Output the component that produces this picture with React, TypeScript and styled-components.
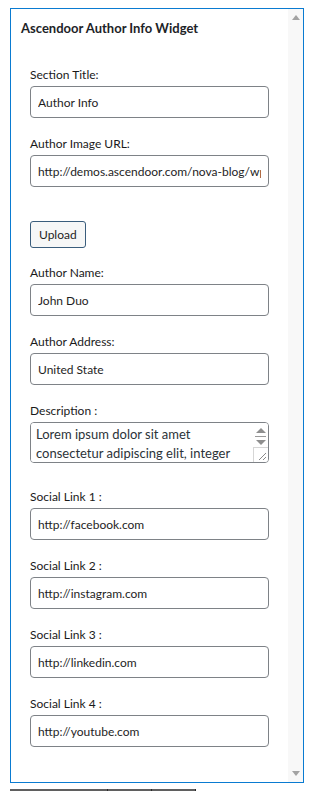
import React from "react";
import styled, { createGlobalStyle } from "styled-components";

const GlobalStyle = createGlobalStyle`
  html, body {
    margin: 0;
    padding: 0;
    background: #ffffff;
  }
  body {
    font-family: Lato, "Open Sans", "Liberation Sans", sans-serif;
    color: #1e1e1e;
  }
`;

type FieldDef = {
  label: string;
  value: string;
};

const topFields: FieldDef[] = [
  { label: "Section Title:", value: "Author Info" },
  { label: "Author Image URL:", value: "http://demos.ascendoor.com/nova-blog/wp-content/uploads/author.jpg" },
];

const middleFields: FieldDef[] = [
  { label: "Author Name:", value: "John Duo" },
  { label: "Author Address:", value: "United State" },
];

const socialFields: FieldDef[] = [
  { label: "Social Link 1 :", value: "http://facebook.com" },
  { label: "Social Link 2 :", value: "http://instagram.com" },
  { label: "Social Link 3 :", value: "http://linkedin.com" },
  { label: "Social Link 4 :", value: "http://youtube.com" },
];

const description =
  "Lorem ipsum dolor sit amet consectetur adipiscing elit, integer nunc quam egestas nibh porta ullamcorper.";

const TextField: React.FC<FieldDef> = ({ label, value }) => (
  <Field>
    <Label>{label}</Label>
    <Input type="text" defaultValue={value} readOnly />
  </Field>
);

const App: React.FC = () => {
  return (
    <Page>
      <GlobalStyle />
      <Panel>
        <Content>
          <Title>Ascendoor Author Info Widget</Title>
          <Form>
            {topFields.map((f) => (
              <TextField key={f.label} {...f} />
            ))}
            <UploadButton type="button">Upload</UploadButton>
            {middleFields.map((f) => (
              <TextField key={f.label} {...f} />
            ))}
            <Field $spacing={25}>
              <Label>Description :</Label>
              <TextBox>
                <TextArea defaultValue={description} readOnly />
                <MiniScroll>
                  <Arrow $dir="up" $small />
                  <ArrowDivider />
                  <Arrow $dir="down" $small />
                  <Grip>
                    <svg width="14" height="14" viewBox="0 0 14 14">
                      <path d="M12 5 L5 12 M12 9 L9 12" stroke="#8a8a8a" strokeWidth="1" />
                    </svg>
                  </Grip>
                </MiniScroll>
              </TextBox>
            </Field>
            {socialFields.map((f) => (
              <TextField key={f.label} {...f} />
            ))}
          </Form>
        </Content>
        <ScrollTrack>
          <Arrow $dir="up" />
          <Arrow $dir="down" />
        </ScrollTrack>
      </Panel>
      <TabStrip>
        <Tab $w={98} />
        <Tab $w={44} />
        <Tab $w={44} />
      </TabStrip>
    </Page>
  );
};

export default App;

const Page = styled.div`
  padding: 8px 0 0 10px;
`;

const Panel = styled.div`
  width: 294px;
  height: 775px;
  box-sizing: border-box;
  border: 1px solid #0a7bd1;
  display: flex;
  overflow: hidden;
`;

const Content = styled.div`
  flex: 1;
  padding: 10px 0 0 10px;
`;

const Title = styled.div`
  font-size: 13px;
  line-height: 18px;
  font-weight: 700;
  color: #1d2327;
`;

const Form = styled.div`
  display: flex;
  flex-direction: column;
  align-items: flex-start;
  padding: 29px 0 0 9px;
`;

const Field = styled.div<{ $spacing?: number }>`
  display: flex;
  flex-direction: column;
  margin-bottom: ${(p) => p.$spacing ?? 17}px;
`;

const Label = styled.label`
  font-size: 12px;
  line-height: 18px;
  color: #1a1a1a;
  margin-bottom: 2px;
`;

const Input = styled.input`
  width: 239px;
  height: 32px;
  box-sizing: border-box;
  border: 1px solid #7e8287;
  border-radius: 4px;
  padding: 0 7px;
  font-family: Lato, "Open Sans", "Liberation Sans", sans-serif;
  font-size: 12px;
  color: #1e1e1e;
  background: #ffffff;
  outline: none;
`;

const UploadButton = styled.button`
  margin: 17px 0 16px;
  height: 27px;
  padding: 0 8px;
  box-sizing: border-box;
  border: 1px solid #3a5d7c;
  border-radius: 3px;
  background: #f6f7f7;
  font-family: Lato, "Open Sans", "Liberation Sans", sans-serif;
  font-size: 12px;
  color: #1e1e1e;
`;

const TextBox = styled.div`
  width: 239px;
  height: 41px;
  box-sizing: border-box;
  border: 1px solid #7e8287;
  border-radius: 4px;
  display: flex;
  overflow: hidden;
`;

const TextArea = styled.textarea`
  flex: 1;
  border: none;
  resize: none;
  overflow: hidden;
  padding: 2px 5px;
  margin: 0;
  font-family: Lato, "Open Sans", "Liberation Sans", sans-serif;
  font-size: 13px;
  line-height: 19px;
  color: #2c3338;
  outline: none;
`;

const MiniScroll = styled.div`
  width: 15px;
  display: flex;
  flex-direction: column;
  align-items: center;
  padding-top: 5px;
  background: #ffffff;
`;

const ArrowDivider = styled.div`
  width: 11px;
  height: 1px;
  background: #9a9a9a;
  margin: 3px 0;
`;

const Grip = styled.div`
  margin-top: auto;
  width: 15px;
  height: 15px;
  box-sizing: border-box;
  border-top: 1px solid #d6d6d6;
  border-left: 1px solid #d6d6d6;
  display: flex;
  align-items: flex-start;
  justify-content: flex-start;
`;

const ScrollTrack = styled.div`
  width: 15px;
  background: #f8f8f8;
  display: flex;
  flex-direction: column;
  align-items: center;
  justify-content: space-between;
  padding: 6px 0 6px;
`;

const Arrow = styled.div<{ $dir: "up" | "down"; $small?: boolean }>`
  width: 0;
  height: 0;
  border-left: ${(p) => (p.$small ? 5 : 4.5)}px solid transparent;
  border-right: ${(p) => (p.$small ? 5 : 4.5)}px solid transparent;
  ${(p) =>
    p.$dir === "up"
      ? `border-bottom: 5px solid ${p.$small ? "#8f8f8f" : "#a3a3a3"};`
      : `border-top: 5px solid ${p.$small ? "#8f8f8f" : "#a3a3a3"};`}
`;

const TabStrip = styled.div`
  display: flex;
  margin-top: 6px;
`;

const Tab = styled.div<{ $w: number }>`
  width: ${(p) => p.$w}px;
  height: 2px;
  box-sizing: border-box;
  background: #5f5f5f;
  border-right: 1px solid #2a2a2a;
`;
